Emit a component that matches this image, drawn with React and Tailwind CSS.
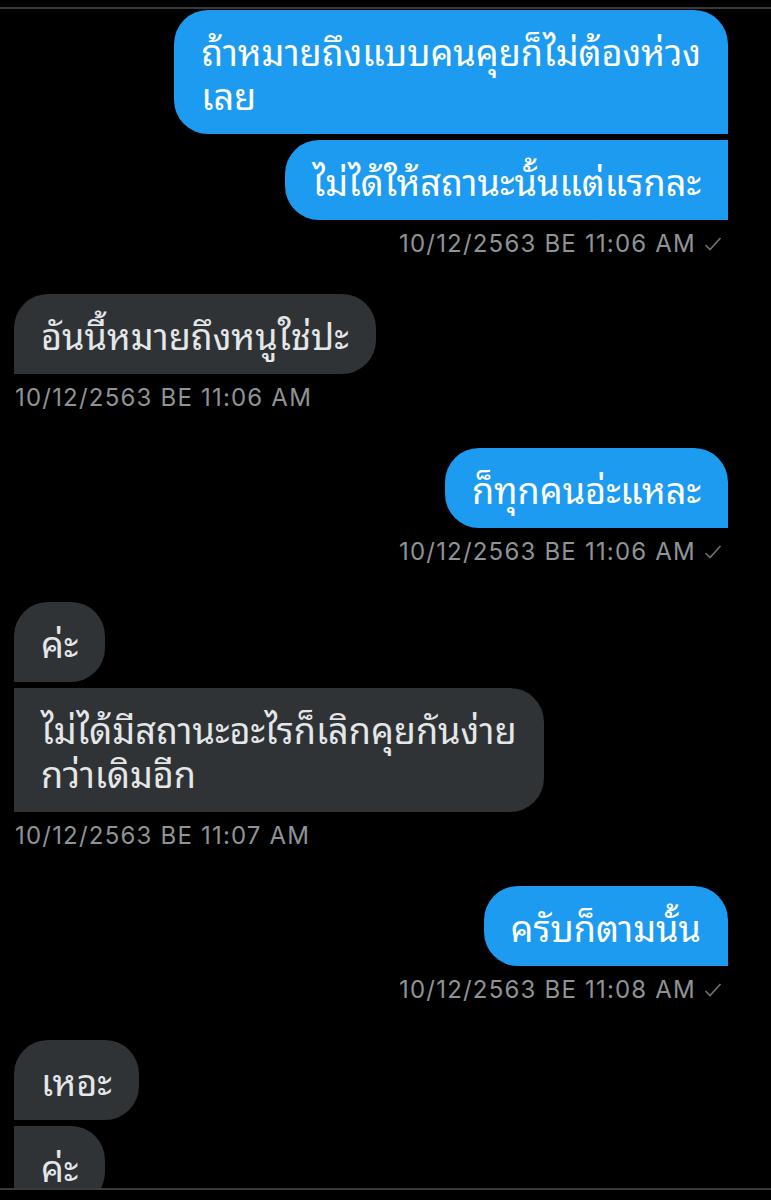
const thai = "font-['Noto_Sans_Thai_Looped','Noto_Sans_Thai','Noto_Sans','DejaVu_Sans',sans-serif]";

const groups = [
  { from: "me", lines: [["ถ้าหมายถึงแบบคนคุยก็ไม่ต้องห่วง", "เลย"], ["ไม่ได้ให้สถานะนั้นแต่แรกละ"]], time: "10/12/2563 BE 11:06 AM" },
  { from: "them", lines: [["อันนี้หมายถึงหนูใช่ปะ"]], time: "10/12/2563 BE 11:06 AM" },
  { from: "me", lines: [["ก็ทุกคนอ่ะแหละ"]], time: "10/12/2563 BE 11:06 AM" },
  { from: "them", lines: [["ค่ะ"], ["ไม่ได้มีสถานะอะไรก็เลิกคุยกันง่าย", "กว่าเดิมอีก"]], time: "10/12/2563 BE 11:07 AM" },
  { from: "me", lines: [["ครับก็ตามนั้น"]], time: "10/12/2563 BE 11:08 AM" },
  { from: "them", lines: [["เหอะ"], ["ค่ะ"]] },
];

function Check() {
  return (
    <svg width="18" height="16" viewBox="0 0 18 16" className="ml-[8px]">
      <polyline points="1.5,9 6,13.5 16.5,2" fill="none" stroke="#6e7275" strokeWidth="1.6" />
    </svg>
  );
}

function Bubble({ me, first, text }) {
  // corner shapes follow twitter's grouping
  let shape;
  if (me) {
    shape = first ? "rounded-[34px] rounded-br-none" : "rounded-l-[34px]";
  } else {
    shape = first ? "rounded-[34px] rounded-bl-none" : "rounded-r-[34px]";
  }
  return (
    <div
      className={`${shape} ${me ? "bg-[#1d9bf0] text-white" : "bg-[#2f3336] text-[#e4e6e8]"} px-[27px] py-[18px] text-[36px] leading-[44px] whitespace-nowrap ${thai}`}
    >
      {text.map((t, i) => (
        <div key={i}>{t}</div>
      ))}
    </div>
  );
}

export default function App() {
  return (
    <div className="h-[1200px] w-[771px] bg-black flex flex-col overflow-hidden">
      <div className="h-[7px]" />
      <div className="h-[2px] bg-[#3a3a3a]" />
      <div className="flex-1 overflow-hidden pt-[1px]">
        {groups.map((g, gi) => {
          const me = g.from === "me";
          return (
            <div key={gi} className={`flex flex-col ${me ? "items-end pr-[43px]" : "items-start pl-[14px]"} mb-[35px]`}>
              <div className={`flex flex-col gap-[6px] ${me ? "items-end" : "items-start"}`}>
                {g.lines.map((l, i) => (
                  <Bubble key={i} me={me} first={i === 0} text={l} />
                ))}
              </div>
              {g.time && (
                <div className={`mt-[9px] h-[30px] flex items-center text-[24px] tracking-[1.2px] text-[#8f9396] font-['Inter','Liberation_Sans',sans-serif] ${me ? "pr-[6px]" : "pl-[1px]"}`}>
                  {g.time}
                  {me && <Check />}
                </div>
              )}
            </div>
          );
        })}
      </div>
      <div className="h-[2px] bg-[#3a3a3a]" />
      <div className="h-[10px]" />
    </div>
  );
}
